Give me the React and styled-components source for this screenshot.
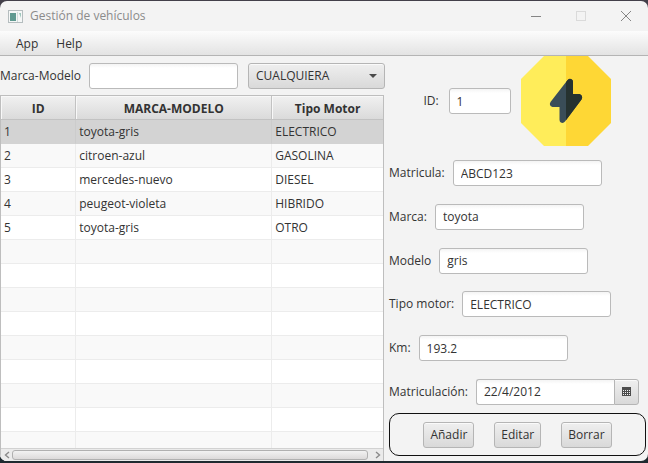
import React, { useState } from "react";
import styled, { createGlobalStyle, css } from "styled-components";

const GlobalStyle = createGlobalStyle`
  * { box-sizing: border-box; }
  body { margin: 0; background: #242c32; }
  body, input, button, select, table {
    font-family: "Open Sans", "Noto Sans", sans-serif;
    font-size: 12px;
    line-height: 16px;
    color: #333;
  }
`;

const Desktop = styled.div`
  display: flex;
  height: 100vh;
  padding: 1px 0 2px;
  background: linear-gradient(#43404a 50%, #1f2a30 50%);
`;

const Window = styled.div`
  flex: 1;
  min-width: 0;
  display: flex;
  flex-direction: column;
  overflow: hidden;
  border-radius: 7px;
  background: #f3f3f3;
`;

const TitleBar = styled.header`
  display: flex;
  align-items: center;
  height: 30px;
  flex: none;
  padding-left: 8px;
  gap: 7px;
  color: #8b8b8b;
`;

const Title = styled.h1`
  flex: 1;
  margin: 0;
  font-size: 12px;
  font-weight: 400;
`;

const WindowButton = styled.button`
  display: grid;
  place-items: center;
  width: 45px;
  height: 29px;
  padding: 0;
  border: 0;
  background: none;
  color: ${(p) => (p.disabled ? "#dadada" : "#858585")};
`;

const WindowButtons = styled.div`
  display: flex;
`;

const MenuBar = styled.nav`
  display: flex;
  flex: none;
  height: 25px;
  padding: 0 8px;
  border-bottom: 1px solid #b4b4b4;
  background: linear-gradient(#fcfcfc, #e3e3e3);
`;

const MenuItem = styled.button`
  padding: 2px 8px 0;
  margin-right: 2px;
  border: 0;
  background: none;
`;

const Content = styled.main`
  flex: 1;
  min-height: 0;
  display: grid;
  grid-template-columns: minmax(0, 384fr) minmax(0, 264fr);
`;

const ListPane = styled.section`
  display: flex;
  flex-direction: column;
  min-height: 0;
`;

const FilterBar = styled.form`
  display: flex;
  align-items: center;
  flex: none;
  gap: 10px;
  height: 39px;
`;

const control = css`
  height: 26px;
  border: 1px solid #bababa;
  border-radius: 3px;
  outline: none;
`;

const raised = css`
  border: 1px solid #b5b5b5;
  background: linear-gradient(#efefef, #d9d9d9);
  box-shadow: inset 0 1px 0 #fafafa;
`;

const TextField = styled.input`
  ${control}
  width: ${(p) => (p.$short ? 62 : 149)}px;
  min-width: 0;
  padding: 0 7px;
  background: linear-gradient(#f4f4f4, #fff 4px);
`;

const SelectBox = styled.div`
  position: relative;
  flex: 1;
  margin-right: -1px;
`;

const Select = styled.select`
  ${control}
  ${raised}
  display: block;
  width: 100%;
  padding: 0 24px 0 7px;
  appearance: none;
`;

const Caret = styled.svg`
  position: absolute;
  right: 8px;
  top: 11px;
  pointer-events: none;
`;

const TableBox = styled.div`
  flex: 1;
  min-height: 0;
  display: flex;
  flex-direction: column;
  border: 1px solid #bebebe;
  border-bottom: 0;
  background: #fff;
`;

const TableView = styled.div`
  flex: 1;
  min-height: 0;
  overflow: hidden;
`;

const Table = styled.table`
  width: 100%;
  table-layout: fixed;
  border-collapse: separate;
  border-spacing: 0;
`;

const Column = styled.col`
  width: ${(p) => p.$share}%;
`;

const HeadCell = styled.th`
  height: 24px;
  padding: 2px 0 0;
  border-right: 1px solid #c2c2c2;
  border-bottom: 1px solid #c2c2c2;
  background: linear-gradient(#f1f1f1, #dadada);
  box-shadow: inset 1px 1px 0 #f8f8f8;
  font-weight: 700;
  &:last-child { border-right: 0; }
`;

const Row = styled.tr`
  background: ${(p) => (p.$selected ? "#d3d3d3" : p.$odd ? "#f9f9f9" : "#fff")};
`;

const Cell = styled.td`
  height: 24px;
  padding: 0 3px;
  border-right: 1px solid ${(p) => (p.$selected ? "#cccccc" : "#ececec")};
  border-bottom: 1px solid ${(p) => (p.$selected ? "#d3d3d3" : "#ececec")};
  &:last-child { border-right: 0; }
`;

const ScrollBar = styled.div`
  display: flex;
  align-items: center;
  flex: none;
  height: 13px;
  border-top: 1px solid #d2d2d2;
  background: #ebebeb;
`;

const ScrollArrow = styled.button`
  display: grid;
  place-items: center;
  width: 11px;
  height: 12px;
  padding: 0;
  border: 0;
  background: none;
  color: #8a8a8a;
`;

const Thumb = styled.div`
  flex: 1;
  height: 10px;
  margin-right: 4px;
  border: 1px solid #b0b0b0;
  border-radius: 3px;
  background: linear-gradient(#f2f2f2, #dcdada);
`;

const DetailPane = styled.form`
  display: flex;
  flex-direction: column;
  min-width: 0;
  padding-bottom: 5px;
`;

const Identity = styled.div`
  display: flex;
  align-items: center;
  justify-content: center;
  gap: 10px;
  padding-left: 2px;
`;

const Fields = styled.div`
  flex: 1;
  display: flex;
  flex-direction: column;
  justify-content: space-between;
  padding: 14px 9px 8px 5px;
`;

const Field = styled.div`
  display: flex;
  align-items: center;
  gap: 8px;
`;

const Label = styled.label`
  white-space: nowrap;
`;

const DatePicker = styled.div`
  flex: 1;
  min-width: 0;
  display: flex;
`;

const DateInput = styled(TextField)`
  flex: 1;
  border-right: 0;
  border-radius: 3px 0 0 3px;
`;

const DateButton = styled.button`
  ${control}
  ${raised}
  display: grid;
  place-items: center;
  width: 25px;
  padding: 0;
  border-radius: 0 3px 3px 0;
`;

const Actions = styled.div`
  display: flex;
  align-items: center;
  justify-content: center;
  flex: none;
  gap: 20px;
  height: 43px;
  margin: 0 2px 0 5px;
  border: 1px solid #111;
  border-radius: 10px;
`;

const Action = styled.button`
  ${control}
  ${raised}
  padding: 0 6px;
`;

const AppIcon = () => (
  <svg width="15" height="13" viewBox="0 0 15 13" aria-hidden="true">
    <rect x="0.5" y="0.5" width="14" height="12" fill="#f5f7f7" stroke="#b5bdbf" />
    <rect x="2" y="3" width="6" height="8" fill="#609a91" />
    <rect x="9" y="2" width="1" height="10" fill="#d0dcda" />
    <path d="M11 3h2v5z" fill="#9fc7bd" />
  </svg>
);

const ElectricIcon = () => (
  <svg width="90" height="90" viewBox="0 0 90 90" role="img" aria-label="Vehículo eléctrico">
    <path d="M23 0H45V90H23L0 67V23Z" fill="#ffed5a" />
    <path d="M45 0H67L90 23V67L67 90H45Z" fill="#fed735" />
    <path
      d="M46.2 24.5Q48 22 50.5 23.2Q52 24 52 26V38H58.5Q62.5 39.5 60.5 43.5L44 65.5Q42 68 39.5 66.2Q38.5 65.5 38.5 63.5V51H31.5Q27.5 49.5 29.5 46Z"
      fill="#3a4d58"
    />
    <path
      d="M45 26.2L46.2 24.5Q48 22 50.5 23.2Q52 24 52 26V38H58.5Q62.5 39.5 60.5 43.5L45 64.2Z"
      fill="#263230"
    />
  </svg>
);

const CalendarIcon = () => (
  <svg width="9" height="9" viewBox="0 0 9 9" aria-hidden="true" shapeRendering="crispEdges">
    <rect width="9" height="9" fill="#4c4c4c" />
    {[3, 5, 7].map((y) =>
      [1, 3, 5, 7].map((x) => <rect key={`${x}-${y}`} x={x} y={y} width="1" height="1" fill="#f2f2f2" />)
    )}
  </svg>
);

const Chevron = ({ right }) => (
  <svg width="6" height="8" viewBox="0 0 6 8" fill="none" stroke="currentColor" strokeWidth="1.4" aria-hidden="true">
    <path d={right ? "M1 1L4.5 4L1 7" : "M5 1L1.5 4L5 7"} />
  </svg>
);

const vehicles = [
  { id: 1, name: "toyota-gris", motor: "ELECTRICO" },
  { id: 2, name: "citroen-azul", motor: "GASOLINA" },
  { id: 3, name: "mercedes-nuevo", motor: "DIESEL" },
  { id: 4, name: "peugeot-violeta", motor: "HIBRIDO" },
  { id: 5, name: "toyota-gris", motor: "OTRO" },
];

const emptyRows = Array.from({ length: 9 }, (_, i) => i + vehicles.length);

const fields = [
  { id: "matricula", label: "Matricula:", value: "ABCD123" },
  { id: "marca", label: "Marca:", value: "toyota" },
  { id: "modelo", label: "Modelo", value: "gris" },
  { id: "tipo", label: "Tipo motor:", value: "ELECTRICO" },
  { id: "km", label: "Km:", value: "193.2" },
];

export default function App() {
  const [selected, setSelected] = useState(1);

  return (
    <Desktop>
      <GlobalStyle />
      <Window>
        <TitleBar>
          <AppIcon />
          <Title>Gestión de vehículos</Title>
          <WindowButtons>
            <WindowButton type="button" aria-label="Minimizar">
              <svg width="10" height="10" stroke="currentColor"><path d="M0 5.5H10" /></svg>
            </WindowButton>
            <WindowButton type="button" aria-label="Maximizar" disabled>
              <svg width="10" height="10" stroke="currentColor" fill="none"><rect x="0.5" y="0.5" width="9" height="9" /></svg>
            </WindowButton>
            <WindowButton type="button" aria-label="Cerrar">
              <svg width="10" height="10" stroke="currentColor"><path d="M0 0L10 10M10 0L0 10" /></svg>
            </WindowButton>
          </WindowButtons>
        </TitleBar>
        <MenuBar>
          <MenuItem type="button">App</MenuItem>
          <MenuItem type="button">Help</MenuItem>
        </MenuBar>
        <Content>
          <ListPane>
            <FilterBar>
              <Field>
                <Label htmlFor="filtro">Marca-Modelo</Label>
                <TextField id="filtro" type="text" />
              </Field>
              <SelectBox>
                <Select aria-label="Tipo de motor" defaultValue="CUALQUIERA">
                  <option>CUALQUIERA</option>
                  {vehicles.map((v) => <option key={v.id}>{v.motor}</option>)}
                </Select>
                <Caret width="8" height="4" viewBox="0 0 8 4" aria-hidden="true">
                  <path d="M0 0H8L4 4Z" fill="#4a4a4a" />
                </Caret>
              </SelectBox>
            </FilterBar>
            <TableBox>
              <TableView>
                <Table>
                  <colgroup>
                    <Column $share={19.7} />
                    <Column $share={51.3} />
                    <Column $share={29} />
                  </colgroup>
                  <thead>
                    <tr>
                      <HeadCell scope="col">ID</HeadCell>
                      <HeadCell scope="col">MARCA-MODELO</HeadCell>
                      <HeadCell scope="col">Tipo Motor</HeadCell>
                    </tr>
                  </thead>
                  <tbody>
                    {vehicles.map((v, i) => {
                      const on = v.id === selected;
                      return (
                        <Row key={v.id} $selected={on} $odd={i % 2 === 1} onClick={() => setSelected(v.id)}>
                          <Cell $selected={on}>{v.id}</Cell>
                          <Cell $selected={on}>{v.name}</Cell>
                          <Cell $selected={on}>{v.motor}</Cell>
                        </Row>
                      );
                    })}
                    {emptyRows.map((i) => (
                      <Row key={i} $odd={i % 2 === 1} aria-hidden="true">
                        <Cell /><Cell /><Cell />
                      </Row>
                    ))}
                  </tbody>
                </Table>
              </TableView>
              <ScrollBar>
                <ScrollArrow type="button" aria-label="Desplazar a la izquierda"><Chevron /></ScrollArrow>
                <Thumb />
                <ScrollArrow type="button" aria-label="Desplazar a la derecha"><Chevron right /></ScrollArrow>
              </ScrollBar>
            </TableBox>
          </ListPane>
          <DetailPane>
            <Identity>
              <Label htmlFor="id">ID:</Label>
              <TextField id="id" type="text" defaultValue="1" $short />
              <ElectricIcon />
            </Identity>
            <Fields>
              {fields.map((f) => (
                <Field key={f.id}>
                  <Label htmlFor={f.id}>{f.label}</Label>
                  <TextField id={f.id} type="text" defaultValue={f.value} />
                </Field>
              ))}
              <Field>
                <Label htmlFor="fecha">Matriculación:</Label>
                <DatePicker>
                  <DateInput id="fecha" type="text" defaultValue="22/4/2012" />
                  <DateButton type="button" aria-label="Abrir calendario"><CalendarIcon /></DateButton>
                </DatePicker>
              </Field>
            </Fields>
            <Actions>
              <Action type="button">Añadir</Action>
              <Action type="button">Editar</Action>
              <Action type="button">Borrar</Action>
            </Actions>
          </DetailPane>
        </Content>
      </Window>
    </Desktop>
  );
}
